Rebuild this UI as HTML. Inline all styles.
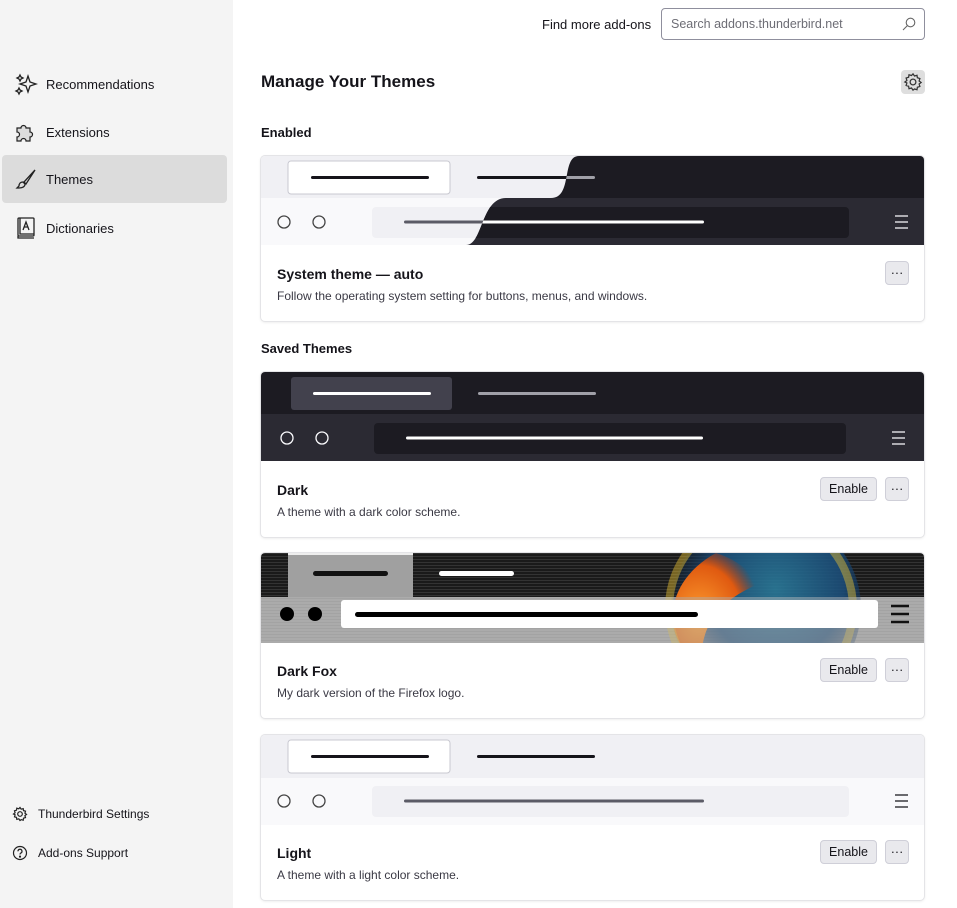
<!DOCTYPE html>
<html><head><meta charset="utf-8"><style>
*{box-sizing:border-box;margin:0;padding:0}
body{width:957px;height:908px;overflow:hidden;background:#fff;font-family:"Liberation Sans",sans-serif;color:#15141a;position:relative}
.side{position:absolute;left:0;top:0;width:233px;height:908px;background:#f4f4f4}
.nav{position:absolute;left:2px;width:225px;height:48px;border-radius:4px;font-size:13px;display:flex;align-items:center}
.nav svg{position:absolute;left:12px}
.nav span{position:absolute;left:44px}
.sel{background:#dcdcdc}
.foot{position:absolute;left:12px;font-size:12px;display:flex;align-items:center}
.foot span{margin-left:10px}
.abs{position:absolute}
.card{position:absolute;left:261px;width:663px;height:165px;border-radius:4px;box-shadow:0 0 0 1px #e4e4e7,0 1px 3px rgba(0,0,0,.12);overflow:hidden;background:#fff}
.card svg.pv{position:absolute;left:0;top:0}
.t{position:absolute;left:16px;top:110px;font-size:14px;font-weight:bold}
.d{position:absolute;left:16px;top:133px;font-size:12px;color:#3a3944}
.btn{position:absolute;top:105px;height:24px;border:1px solid #cfcfd8;background:#e9e9ed;border-radius:4px;font-size:12.5px;display:flex;align-items:center;justify-content:center}
h1{position:absolute;left:261px;top:72px;font-size:17px;font-weight:bold}
h2{position:absolute;left:261px;font-size:13px;font-weight:bold}
</style></head><body>
<div class="side">
 <div class="nav" style="top:60px"><svg width="24" height="24" viewBox="0 0 24 24" fill="none" stroke="#222" stroke-width="1.3"><path d="M14 4 L16 10 L22 12 L16 14 L14 20 L12 14 L6 12 L12 10Z"/><path d="M6 3l1 2 2 1-2 1-1 2-1-2-2-1 2-1z"/><path d="M5 16l1 2 2 1-2 1-1 2-1-2-2-1 2-1z"/></svg><span>Recommendations</span></div>
 <div class="nav" style="top:108px"><svg width="24" height="24" viewBox="0 0 24 24" fill="#ddd" stroke="#222" stroke-width="1.2"><path d="M3 8h4a2.5 2.5 0 1 1 5 0h4v4a2.5 2.5 0 1 1 0 5v4h-4a2.5 2.5 0 1 0-5 0H3v-4a2.5 2.5 0 1 0 0-5z"/></svg><span>Extensions</span></div>
 <div class="nav sel" style="top:155px"><svg width="24" height="24" viewBox="0 0 24 24" fill="none" stroke="#222" stroke-width="1.3"><path d="M21 3 L10 15 L12 17 Z"/><path d="M9 15c-3 0-4 2-4 4l-2 2c3 0 8 0 8-4z"/></svg><span>Themes</span></div>
 <div class="nav" style="top:204px"><svg width="24" height="24" viewBox="0 0 24 24" fill="none" stroke="#222" stroke-width="1.3"><rect x="4" y="2" width="16" height="18" rx="1"/><path d="M6 2v16h14M4 20v2h16"/><path d="M9 14l3-8 3 8M10 11h4"/></svg><span>Dictionaries</span></div>
 <div class="foot" style="top:806px"><svg width="16" height="16" viewBox="0 0 16 16" fill="none" stroke="#222" stroke-width="1.2"><circle cx="8" cy="8" r="2.3"/><path d="M8 1.5l1.2 1.7 2-.6.3 2 2 .6-.6 2 1.6 1.2-1.6 1.2.6 2-2 .6-.3 2-2-.6L8 14.5l-1.2-1.7-2 .6-.3-2-2-.6.6-2L1.5 8l1.6-1.2-.6-2 2-.6.3-2 2 .6z"/></svg><span>Thunderbird Settings</span></div>
 <div class="foot" style="top:845px"><svg width="16" height="16" viewBox="0 0 16 16" fill="none" stroke="#222" stroke-width="1.2"><circle cx="8" cy="8" r="6.5"/><path d="M6 6.3a2 2 0 1 1 2.7 1.8c-.6.3-.7.7-.7 1.4"/><circle cx="8" cy="11.6" r=".5" fill="#222"/></svg><span>Add-ons Support</span></div>
</div>
<div class="abs" style="left:542px;top:17px;font-size:13px">Find more add-ons</div>
<div class="abs" style="left:661px;top:8px;width:264px;height:32px;border:1px solid #8f8f9d;border-radius:4px;font-size:12.5px;color:#6d6d75;padding:8px 0 0 9px">Search addons.thunderbird.net
<svg class="abs" style="right:8px;top:8px" width="14" height="14" viewBox="0 0 14 14" fill="none" stroke="#666" stroke-width="1.1"><circle cx="8.5" cy="5.5" r="4.3"/><path d="M5.5 8.5L1 13"/></svg></div>
<h1>Manage Your Themes</h1>
<div class="abs" style="left:901px;top:70px;width:24px;height:24px;background:#dedede;border-radius:4px"><svg class="abs" style="left:2px;top:2px" width="20" height="20" viewBox="0 0 16 16" fill="none" stroke="#333" stroke-width="1"><circle cx="8" cy="8" r="2.3"/><path d="M8 1.5l1.2 1.7 2-.6.3 2 2 .6-.6 2 1.6 1.2-1.6 1.2.6 2-2 .6-.3 2-2-.6L8 14.5l-1.2-1.7-2 .6-.3-2-2-.6.6-2L1.5 8l1.6-1.2-.6-2 2-.6.3-2 2 .6z"/></svg></div>
<h2 style="top:125px">Enabled</h2>
<h2 style="top:341px">Saved Themes</h2>

<div class="card" style="top:156px">
<svg class="pv" width="663" height="89" viewBox="0 0 663 89">
<defs><clipPath id="dk"><path d="M318 0H663V89H205C222 89 220 42 245 42H290C312 42 300 0 318 0Z"/></clipPath></defs>
<rect width="663" height="42" fill="#f0f0f4"/><rect y="42" width="663" height="47" fill="#f9f9fb"/>
<rect x="27" y="5" width="162" height="33" rx="3" fill="#fff" stroke="#c8c8d0"/>
<rect x="50" y="20" width="118" height="3" rx="1.5" fill="#15141a"/>
<rect x="216" y="20" width="118" height="3" rx="1.5" fill="#15141a"/>
<g fill="none" stroke="#444" stroke-width="1.3"><circle cx="23" cy="66" r="6"/><circle cx="58" cy="66" r="6"/><circle cx="127" cy="66" r="6"/></g>
<rect x="111" y="51" width="477" height="31" rx="4" fill="#f0f0f4"/>
<rect x="143" y="64.5" width="300" height="3" rx="1.5" fill="#5b5b66"/>
<g stroke="#15141a" stroke-width="1.3"><path d="M634 60h13M634 66h13M634 72h13"/></g>
<g clip-path="url(#dk)">
<rect width="663" height="42" fill="#1c1b22"/><rect y="42" width="663" height="47" fill="#2b2a33"/>
<rect x="111" y="51" width="477" height="31" rx="4" fill="#1c1b22"/>
<rect x="216" y="20" width="118" height="3" rx="1.5" fill="#a0a0a8"/>
<rect x="143" y="64.5" width="300" height="3" rx="1.5" fill="#fff"/>
<g stroke="#fbfbfe" stroke-width="1.3"><path d="M634 60h13M634 66h13M634 72h13"/></g>
</g></svg>
<div class="t">System theme — auto</div>
<div class="d">Follow the operating system setting for buttons, menus, and windows.</div>
<div class="btn" style="left:624px;width:24px">···</div>
</div>

<div class="card" style="top:372px">
<svg class="pv" width="663" height="89" viewBox="0 0 663 89">
<rect width="663" height="42" fill="#1c1b22"/><rect y="42" width="663" height="47" fill="#2b2a33"/>
<rect x="30" y="5" width="161" height="33" rx="3" fill="#42414d"/>
<rect x="52" y="20" width="118" height="3" rx="1.5" fill="#fff"/>
<rect x="217" y="20" width="118" height="3" rx="1.5" fill="#a0a0a8"/>
<g fill="none" stroke="#fbfbfe" stroke-width="1.3"><circle cx="26" cy="66" r="6"/><circle cx="61" cy="66" r="6"/><circle cx="129" cy="66" r="6"/></g>
<rect x="113" y="51" width="472" height="31" rx="4" fill="#1c1b22"/>
<rect x="145" y="64.5" width="297" height="3" rx="1.5" fill="#fff"/>
<g stroke="#fbfbfe" stroke-width="1.3"><path d="M631 60h13M631 66h13M631 72h13"/></g>
</svg>
<div class="t">Dark</div>
<div class="d">A theme with a dark color scheme.</div>
<div class="btn" style="left:559px;width:57px">Enable</div>
<div class="btn" style="left:624px;width:24px">···</div>
</div>

<div class="card" style="top:553px">
<svg class="pv" width="663" height="90" viewBox="0 0 663 90">
<defs>
<pattern id="st" width="4" height="3" patternUnits="userSpaceOnUse"><rect width="4" height="3" fill="#1a1a1a"/><rect width="4" height="1" fill="#333"/></pattern>
<pattern id="sg" width="4" height="3" patternUnits="userSpaceOnUse"><rect width="4" height="3" fill="#a8a8a8"/><rect width="4" height="1" fill="#999"/></pattern>
<radialGradient id="gl" cx="0.55" cy="0.4" r="0.6"><stop offset="0" stop-color="#2a7a9a"/><stop offset="0.6" stop-color="#1b4c78"/><stop offset="1" stop-color="#0a2040" stop-opacity="0"/></radialGradient>
<radialGradient id="fx" cx="0.3" cy="0.6" r="0.7"><stop offset="0" stop-color="#ffa030"/><stop offset="0.7" stop-color="#e05a10"/><stop offset="1" stop-color="#c03000" stop-opacity="0"/></radialGradient>
</defs>
<rect width="663" height="44" fill="url(#st)"/><rect y="44" width="663" height="46" fill="url(#sg)"/>
<circle cx="505" cy="55" r="95" fill="url(#gl)" opacity=".9"/>
<path d="M455 0 C400 30 400 90 440 110 C440 80 450 50 500 30 C480 10 470 5 455 0Z" fill="url(#fx)"/>
<circle cx="500" cy="55" r="92" fill="none" stroke="#e8c030" stroke-width="8" opacity=".45"/>
<rect y="44" width="663" height="46" fill="#b0b0b0" opacity=".45"/>
<rect x="27" y="2" width="125" height="42" fill="#a0a0a0"/><rect x="27" y="0" width="125" height="2" fill="#eee"/>
<rect x="52" y="18" width="75" height="5" rx="2.5" fill="#111"/>
<rect x="178" y="18" width="75" height="5" rx="2.5" fill="#fff"/>
<circle cx="26" cy="61" r="7" fill="#000"/><circle cx="54" cy="61" r="7" fill="#000"/>
<rect x="80" y="47" width="537" height="28" rx="3" fill="#fff"/>
<rect x="94" y="59" width="343" height="5" rx="2.5" fill="#000"/>
<g stroke="#111" stroke-width="2.5"><path d="M630 53h18M630 61h18M630 69h18"/></g>
</svg>
<div class="t">Dark Fox</div>
<div class="d">My dark version of the Firefox logo.</div>
<div class="btn" style="left:559px;width:57px">Enable</div>
<div class="btn" style="left:624px;width:24px">···</div>
</div>

<div class="card" style="top:735px">
<svg class="pv" width="663" height="90" viewBox="0 0 663 90">
<rect width="663" height="43" fill="#f0f0f4"/><rect y="43" width="663" height="47" fill="#f9f9fb"/>
<rect x="27" y="5" width="162" height="33" rx="3" fill="#fff" stroke="#c8c8d0"/>
<rect x="50" y="20" width="118" height="3" rx="1.5" fill="#15141a"/>
<rect x="216" y="20" width="118" height="3" rx="1.5" fill="#15141a"/>
<g fill="none" stroke="#444" stroke-width="1.3"><circle cx="23" cy="66" r="6"/><circle cx="58" cy="66" r="6"/><circle cx="127" cy="66" r="6"/></g>
<rect x="111" y="51" width="477" height="31" rx="4" fill="#f0f0f4"/>
<rect x="143" y="64.5" width="300" height="3" rx="1.5" fill="#5b5b66"/>
<g stroke="#15141a" stroke-width="1.3"><path d="M634 60h13M634 66h13M634 72h13"/></g>
</svg>
<div class="t">Light</div>
<div class="d">A theme with a light color scheme.</div>
<div class="btn" style="left:559px;width:57px">Enable</div>
<div class="btn" style="left:624px;width:24px">···</div>
</div>
</body></html>
